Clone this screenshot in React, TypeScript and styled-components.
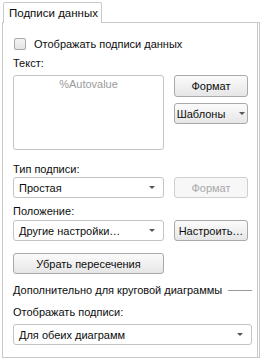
import React from "react";
import styled, { createGlobalStyle } from "styled-components";

const Global = createGlobalStyle`
  html, body { margin: 0; padding: 0; background: #fff; }
  body { font-family: "Liberation Sans", Arial, sans-serif; font-size: 11px; color: #0d0d0d; }
  * { box-sizing: border-box; }
`;

const Root = styled.div`
  width: 262px;
  height: 362px;
  padding: 2px 2px 4px 2px;
  display: flex;
  flex-direction: column;
`;

const TabBar = styled.div`
  display: flex;
  padding-left: 1px;
  height: 21px;
  position: relative;
  z-index: 1;
`;

const Tab = styled.div`
  border: 1px solid #c9c9c9;
  border-bottom: none;
  background: #fff;
  padding: 0 6px 0 5px;
  width: 99px;
  height: 21px;
  display: flex;
  align-items: center;
  white-space: nowrap;
  font-size: 11.5px;
  border-radius: 2px 2px 0 0;
`;

const Panel = styled.div`
  flex: 1;
  margin-top: -1px;
  border: 1px solid #c9c9c9;
  border-right: 3px double #c9c9c9;
  padding: 14px 5px 0 10px;
  display: flex;
  flex-direction: column;
`;

const CheckRow = styled.label`
  display: flex;
  align-items: center;
  gap: 8px;
  padding-left: 1px;
  height: 14px;
`;

const Box = styled.span`
  width: 12px;
  height: 12px;
  border: 1px solid #a8a8a8;
  border-radius: 2px;
  background: linear-gradient(#f4f4f4, #e4e4e4);
`;

const Label = styled.div<{ $mt?: number }>`
  margin-top: ${(p) => p.$mt ?? 0}px;
  height: 14px;
  line-height: 14px;
`;

const Row = styled.div<{ $mt?: number }>`
  display: flex;
  gap: 10px;
  margin-top: ${(p) => p.$mt ?? 0}px;
  align-items: flex-start;
`;

const TextArea = styled.div`
  width: 151px;
  height: 75px;
  border: 1px solid #c4c4c4;
  border-radius: 3px;
  color: #9a9a9a;
  text-align: center;
  padding-top: 2px;
`;

const Col = styled.div`
  display: flex;
  flex-direction: column;
  gap: 6px;
`;

const Button = styled.div<{ $w?: number; $disabled?: boolean; $h?: number }>`
  width: ${(p) => p.$w ?? 74}px;
  height: ${(p) => p.$h ?? 21}px;
  border: 1px solid ${(p) => (p.$disabled ? "#cfcfcf" : "#a9a9a9")};
  border-radius: 3px;
  background: ${(p) => (p.$disabled ? "#f7f7f7" : "linear-gradient(#fbfbfb, #e6e6e6)")};
  color: ${(p) => (p.$disabled ? "#a8a8a8" : "#0d0d0d")};
  display: flex;
  align-items: center;
  justify-content: center;
  gap: 14px;
  white-space: nowrap;
`;

const Select = styled.div<{ $w?: number }>`
  width: ${(p) => p.$w ?? 151}px;
  height: 21px;
  border: 1px solid #c4c4c4;
  border-radius: 3px;
  background: #fff;
  display: flex;
  align-items: center;
  justify-content: space-between;
  padding: 0 8px 0 5px;
`;

const Arrow = styled.span`
  width: 0;
  height: 0;
  border-left: 3px solid transparent;
  border-right: 3px solid transparent;
  border-top: 3px solid #555;
`;

const SectionHead = styled.div`
  display: flex;
  align-items: center;
  gap: 6px;
  margin-top: 9px;
  height: 14px;
  white-space: nowrap;
`;

const Rule = styled.div`
  flex: 1;
  height: 1px;
  background: #9a9a9a;
`;

export default function App() {
  return (
    <>
      <Global />
      <Root>
        <TabBar>
          <Tab>Подписи данных</Tab>
        </TabBar>
        <Panel>
          <CheckRow>
            <Box />
            <span>Отображать подписи данных</span>
          </CheckRow>
          <Label $mt={5}>Текст:</Label>
          <Row $mt={5}>
            <TextArea>%Autovalue</TextArea>
            <Col>
              <Button $h={22}>Формат</Button>
              <Button>
                <span>Шаблоны</span>
                <Arrow />
              </Button>
            </Col>
          </Row>
          <Label $mt={12}>Тип подписи:</Label>
          <Row $mt={1}>
            <Select>
              <span>Простая</span>
              <Arrow />
            </Select>
            <Button $disabled>Формат</Button>
          </Row>
          <Label $mt={6}>Положение:</Label>
          <Row $mt={2}>
            <Select>
              <span>Другие настройки…</span>
              <Arrow />
            </Select>
            <Button>Настроить…</Button>
          </Row>
          <Row $mt={12}>
            <Button $w={151}>Убрать пересечения</Button>
          </Row>
          <SectionHead>
            <span>Дополнительно для круговой диаграммы</span>
            <Rule />
          </SectionHead>
          <Label $mt={8}>Отображать подписи:</Label>
          <Row $mt={5}>
            <Select $w={240}>
              <span>Для обеих диаграмм</span>
              <Arrow />
            </Select>
          </Row>
        </Panel>
      </Root>
    </>
  );
}
